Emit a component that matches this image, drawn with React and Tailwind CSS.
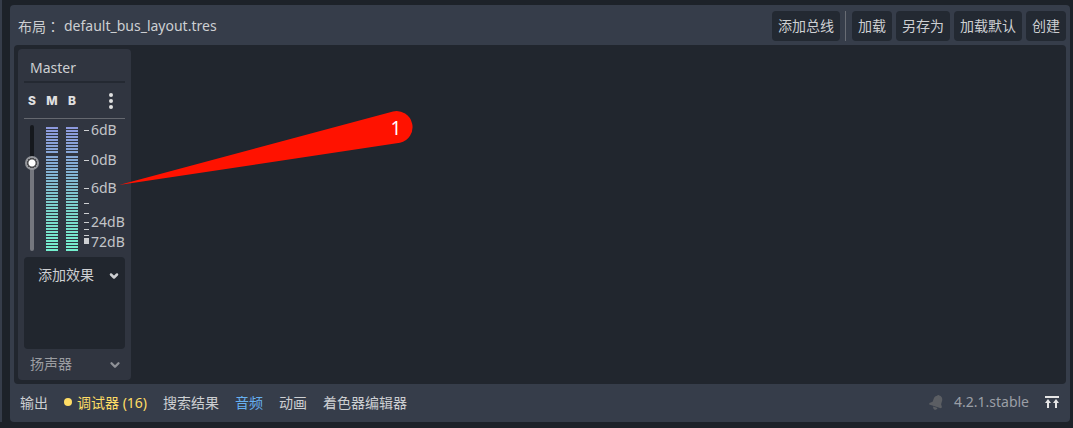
import { ChevronDown } from "lucide-react";

const actionClass =
  "h-[30px] rounded-sm bg-[#232932] px-1.5 text-[14px] leading-5 whitespace-nowrap text-[#cdcfd2]";

const tabs = ["搜索结果", "音频", "动画", "着色器编辑器"];

const labels = [
  { y: 5, text: "6dB" },
  { y: 35, text: "0dB" },
  { y: 63, text: "6dB" },
  { y: 97, text: "24dB" },
  { y: 117, text: "72dB" },
];

const ticks = [5, 35, 63, 78, 88, 97, 104, 110];

function Meter({ id }) {
  const stripes = [];
  for (let i = 0; i < 42; i += 1) {
    const y = i < 9 ? 2 + i * 3 : 31 + (i - 9) * 3;
    if (y < 126) stripes.push(y);
  }
  return (
    <svg className="h-[126px] w-3 shrink-0" viewBox="0 0 12 126" aria-hidden="true">
      <defs>
        <linearGradient id={id} x1="0" y1="0" x2="0" y2="126" gradientUnits="userSpaceOnUse">
          <stop offset="0" stopColor="#8d98df" />
          <stop offset="0.35" stopColor="#84b0d4" />
          <stop offset="0.7" stopColor="#7bd6ca" />
          <stop offset="1" stopColor="#74f0cf" />
        </linearGradient>
      </defs>
      {stripes.map((y) => (
        <rect key={y} x="0" y={y} width="12" height="2" fill={`url(#${id})`} />
      ))}
    </svg>
  );
}

function Scale() {
  return (
    <svg className="h-[126px] w-[42px] shrink-0 overflow-visible" viewBox="0 0 42 126">
      {ticks.map((y) => (
        <rect key={y} x="0" y={y} width="5" height="1" fill="#cdcfd2" />
      ))}
      <rect x="0" y="113" width="5" height="6" fill="#cdcfd2" />
      {labels.map((l) => (
        <text key={l.y} x="7" y={l.y + 5} fontSize="14" fill="#c3c5c9">
          {l.text}
        </text>
      ))}
    </svg>
  );
}

function Bus() {
  return (
    <section className="flex w-[113px] flex-col rounded-sm bg-[#303540] px-1.5 pt-1.5">
      <input
        aria-label="Bus name"
        defaultValue="Master"
        className="h-7 w-full border-b-2 border-[#242932] bg-transparent px-1.5 pb-0.5 text-[14px] leading-5 text-[#cdcfd2] outline-none"
      />
      <div className="flex h-9 items-center border-b border-[#65686f] font-['Inter',sans-serif] text-[12px] font-extrabold text-[#e0e0e0]">
        <button aria-label="Solo" className="w-4">S</button>
        <button aria-label="Mute" className="ml-0.5 w-5">M</button>
        <button aria-label="Bypass" className="w-5">B</button>
        <button aria-label="Bus options" className="ml-auto flex w-7 justify-center">
          <svg className="h-4 w-1" viewBox="0 0 4 16" fill="#e0e0e0">
            <circle cx="2" cy="2" r="2" />
            <circle cx="2" cy="8" r="2" />
            <circle cx="2" cy="14" r="2" />
          </svg>
        </button>
      </div>
      <div className="mt-1.5 flex">
        <input
          type="range"
          aria-label="Volume"
          min="0"
          max="100"
          defaultValue="72"
          className="h-[126px] w-4 shrink-0 appearance-none bg-transparent [direction:rtl] [writing-mode:vertical-lr] [&::-webkit-slider-runnable-track]:w-1 [&::-webkit-slider-runnable-track]:rounded-full [&::-webkit-slider-runnable-track]:bg-[linear-gradient(#15181d_38px,#74777e_38px)] [&::-webkit-slider-thumb]:-ml-[5px] [&::-webkit-slider-thumb]:size-3.5 [&::-webkit-slider-thumb]:appearance-none [&::-webkit-slider-thumb]:rounded-full [&::-webkit-slider-thumb]:bg-[radial-gradient(circle,#ffffff_3px,#4a4b4e_4px,#4a4b4e_5px,#94969b_5px)]"
        />
        <div className="ml-1.5 flex gap-2">
          <Meter id="meter-left" />
          <Meter id="meter-right" />
        </div>
        <div className="ml-1.5">
          <Scale />
        </div>
      </div>
      <div className="mt-1.5 h-[92px] rounded-sm bg-[#21262e]">
        <button className="flex h-[34px] w-full items-center justify-between pr-[5px] pl-3.5 text-[14px] text-[#cdcfd2]">
          添加效果
          <ChevronDown className="mt-1 size-3" strokeWidth={5} />
        </button>
      </div>
      <div className="relative flex h-[31px] items-center">
        <select
          aria-label="Send to"
          disabled
          className="h-full w-full appearance-none bg-transparent px-1.5 pb-0.5 text-[14px] text-[#9a9ca1] disabled:opacity-100"
        >
          <option>扬声器</option>
        </select>
        <ChevronDown
          className="pointer-events-none absolute right-[3px] size-3.5 text-[#8e9197]"
          strokeWidth={4}
        />
      </div>
    </section>
  );
}

function Callout() {
  return (
    <svg
      className="pointer-events-none absolute top-[110px] left-[119px] h-[76px] w-[296px]"
      viewBox="0 0 296 76"
    >
      <path d="M0 75 L274 1.5 A16 16 0 1 1 281 32.8 Z" fill="#ff1200" />
      <text x="277" y="25" textAnchor="middle" fontSize="19" fill="#ffffff">
        1
      </text>
    </svg>
  );
}

export default function App() {
  return (
    <div className="relative flex min-h-screen gap-2 bg-[#1d2229] pr-[3px] pb-1.5 font-['Noto_Sans','Noto_Sans_CJK_SC',sans-serif] text-[14px] text-[#cdcfd2]">
      <div className="w-0.5 shrink-0 bg-[#363d4a]" />
      <main className="mt-[5px] flex min-w-0 flex-1 flex-col rounded-sm bg-[#363d4a] px-1">
        <header className="flex h-10 shrink-0 items-center justify-between pt-0.5 pl-1">
          <div className="flex gap-1 leading-5 whitespace-nowrap">
            <span>
              布局<span className="font-['Noto_Sans_CJK_TC',sans-serif]" lang="zh-Hant">：</span>
            </span>
            <span>default_bus_layout.tres</span>
          </div>
          <div className="flex items-center gap-1">
            <button className={actionClass}>添加总线</button>
            <div className="mr-0.5 ml-px h-[30px] w-px bg-[#686c74]" />
            <button className={actionClass}>加载</button>
            <button className={actionClass}>另存为</button>
            <button className={actionClass}>加载默认</button>
            <button className={actionClass}>创建</button>
          </div>
        </header>
        <div className="flex flex-1 rounded-sm bg-[#21262e] p-1">
          <Bus />
        </div>
        <footer className="flex h-[38px] shrink-0 items-center justify-between pr-[7px] pb-0.5 pl-1.5">
          <nav className="flex gap-4 whitespace-nowrap">
            <button>输出</button>
            <button className="flex items-center gap-[5px] text-[#ffdd65]">
              <span className="size-2 rounded-full bg-[#ffdd65]" />
              调试器 (16)
            </button>
            {tabs.map((tab) => (
              <button key={tab} className={tab === "音频" ? "text-[#67b0f0]" : ""}>
                {tab}
              </button>
            ))}
          </nav>
          <div className="flex items-center">
            <button aria-label="Notifications" className="mr-2.5">
              <svg className="size-4" viewBox="0 0 16 16" fill="#5b5e63">
                <path d="M9.2 1.4a1.3 1.3 0 0 1 2.2.2c2.200.600 3.300 2.700 2.700 5.100l-1 3.600.9 3-1.200 1L1.200 10.600l.2-1.500L4.600 7.700l1.200-3.200C6.500 2.800 7.700 1.900 9.200 1.800z" />
                <path d="M5.200 12.600l4.300 1.500c-.5 1.500-1.800 2-2.900 1.600s-1.700-1.600-1.400-3.100z" />
              </svg>
            </button>
            <button className="mr-4 pb-0.5 text-[#9b9fa6]">4.2.1.stable</button>
            <button aria-label="Expand bottom panel">
              <svg className="h-3 w-3.5" viewBox="0 0 14 12" fill="#e6e6e6">
                <path d="M0 0h14v2H0zM3 3l3 4H4v5H2V7H0zM11 3l3 4h-2v5h-2V7H8z" />
              </svg>
            </button>
          </div>
        </footer>
      </main>
      <Callout />
    </div>
  );
}
